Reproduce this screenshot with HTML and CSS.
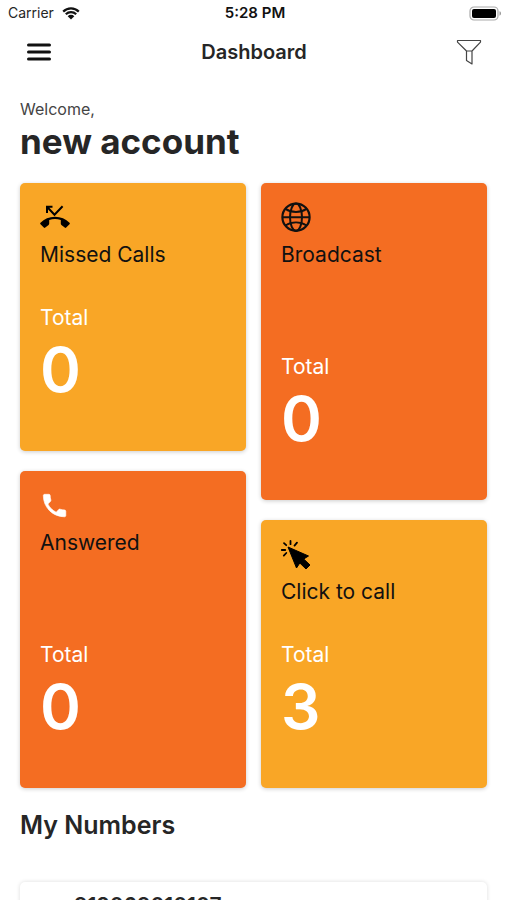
FILE: index.html
```html
<!DOCTYPE html>
<html lang="en">
<head>
<meta charset="utf-8">
<meta name="viewport" content="width=device-width, initial-scale=1">
<title>Dashboard</title>
<link rel="stylesheet" href="styles.css">
</head>
<body>
<div class="app">
  <div class="status">
    <div class="carrier">Carrier
      <svg class="wifi" viewBox="0 0 18 13" aria-hidden="true">
        <path d="M1.2 4.6a11 11 0 0 1 15.6 0M3.8 7.3a7.4 7.4 0 0 1 10.4 0" fill="none" stroke="#111" stroke-width="2.2"/>
        <path d="M5.7 9.2a4.7 4.7 0 0 1 6.6 0L9 12.6z" fill="#111"/>
      </svg>
    </div>
    <div class="time">5:28 PM</div>
    <svg class="battery" viewBox="0 0 33 15" aria-hidden="true">
      <rect x="1" y="1" width="28" height="13" rx="4" fill="#fff" stroke="#aaa" stroke-width="1.2"/>
      <rect x="3" y="3" width="24" height="9" rx="2" fill="#000"/>
      <path d="M30.5 5.3c2 .6 2 3.800 0 4.400z" fill="#999"/>
    </svg>
  </div>
  <header class="bar">
    <button class="icon-button" type="button" aria-label="Menu">
      <svg viewBox="0 0 24 24" width="24" height="24"><path d="M1.500 5h21M1.500 12h21M1.500 19h21" stroke="#111" stroke-width="3" stroke-linecap="round"/></svg>
    </button>
    <h1 class="title">Dashboard</h1>
    <button class="icon-button" type="button" aria-label="Filter">
      <svg viewBox="0 0 26 26" width="26" height="26"><path d="M1.500 1.500h23v1.600L16 12v13l-5.500-3.500V12L1.500 3.100zM10.500 12H16" fill="none" stroke="#444" stroke-width="1.200" stroke-linejoin="round"/></svg>
    </button>
  </header>
  <main class="content">
    <p class="welcome">Welcome,</p>
    <h2 class="account">new account</h2>
    <div class="cards">
      <div class="column">
        <section class="card amber">
          <svg class="icon" viewBox="0 0 30 30" aria-hidden="true">
            <path d="M7 10V3.800H12.500M7.200 4l7.300 7.800L22.600 3.300" fill="none" stroke="#000" stroke-width="2"/>
            <path d="M15 13.800C9.300 13.800 4.200 16 .5 19.700a1 1 0 0 0 0 1.500l3.300 3.400a1 1 0 0 0 1.500 0l3.300-2.700a1.500 1.500 0 0 0 .6-1.100v-3.800a19 19 0 0 1 11.600 0v3.800c0 .4.200.8.600 1.100l3.300 2.700a1 1 0 0 0 1.500 0l3.300-3.400a1 1 0 0 0 0-1.500C25.800 16 20.700 13.800 15 13.800z"/>
          </svg>
          <h3 class="name">Missed Calls</h3>
          <p class="label">Total</p>
          <p class="count">0</p>
        </section>
        <section class="card orange tall">
          <svg class="icon" viewBox="0 0 30 30" aria-hidden="true">
            <path d="M7.900 13.000c1.800 3.500 4.700 6.400 8.200 8.200l2.700-2.700c.4-.4.900-.5 1.300-.3 1.400.5 2.900.7 4.400.7.700 0 1.300.6 1.300 1.300V24.500c0 .7-.6 1.300-1.300 1.300C12.700 25.800 3.300 16.400 3.300 4.600c0-.7.600-1.300 1.300-1.300h4.300c.7 0 1.300.6 1.300 1.300 0 1.500.2 3 .7 4.400.1.400 0 .9-.3 1.300z" fill="#fff" stroke="#fff" stroke-width=".6"/>
          </svg>
          <h3 class="name">Answered</h3>
          <p class="label">Total</p>
          <p class="count">0</p>
        </section>
      </div>
      <div class="column">
        <section class="card orange tall">
          <svg class="icon" viewBox="0 0 30 30" aria-hidden="true">
            <path d="M1.200 14.200h27.600M4.500 5.900c6 4.200 15 4.200 21 0M4.500 22.500c6-4.200 15-4.200 21 0" fill="none" stroke="#111" stroke-width="1.900"/>
            <circle cx="15" cy="14.200" r="13.600" fill="none" stroke="#111" stroke-width="2.200"/>
            <ellipse cx="15" cy="14.200" rx="6" ry="13.600" fill="none" stroke="#111" stroke-width="2"/>
          </svg>
          <h3 class="name">Broadcast</h3>
          <p class="label">Total</p>
          <p class="count">0</p>
        </section>
        <section class="card amber">
          <svg class="icon" viewBox="0 0 30 30" aria-hidden="true">
            <path d="M7 7l20.500 9-4.800 3 6.300 6-4 4-6.200-6-3.300 5z" stroke="#000" stroke-linejoin="round"/>
            <path d="M9.500 1v3.200M16 2.700l-2.500 2.900M3 3.200l2.200 2M.8 10h3.400M5.300 13l-2.500 2.600" stroke="#000" stroke-width="1.800" stroke-linecap="round"/>
          </svg>
          <h3 class="name">Click to call</h3>
          <p class="label">Total</p>
          <p class="count">3</p>
        </section>
      </div>
    </div>
    <h2 class="section-title">My Numbers</h2>
    <ul class="numbers">
      <li class="number">918069010107</li>
    </ul>
  </main>
</div>
</body>
</html>
```

FILE: styles.css
```css
* { box-sizing: border-box; }

body {
  margin: 0;
  background: #fff;
  color: #262626;
  font-family: Inter, "Liberation Sans", sans-serif;
}

h1, h2, h3, p, ul {
  margin: 0;
  padding: 0;
}

svg { display: block; overflow: visible; }

.app {
  display: flex;
  flex-direction: column;
  height: 100vh;
  overflow: hidden;
}

.status {
  display: grid;
  grid-template-columns: 1fr auto 1fr;
  align-items: center;
  height: 26px;
  flex: none;
  padding: 0 5px 0 8px;
  font-size: 14px;
  line-height: 20px;
}

.carrier {
  display: flex;
  align-items: center;
  gap: 8px;
}

.wifi { width: 18px; height: 13px; }

.time {
  color: #111;
  font-size: 15px;
  font-weight: 600;
}

.battery {
  width: 33px;
  height: 15px;
  justify-self: end;
}

.bar {
  display: flex;
  align-items: center;
  justify-content: space-between;
  height: 52px;
  flex: none;
  padding: 0 19px 0 20px;
}

.icon-button {
  display: flex;
  align-items: center;
  justify-content: center;
  width: 38px;
  height: 38px;
  padding: 0;
  border: 0;
  background: none;
}

.title {
  font-size: 20px;
  line-height: 28px;
  font-weight: 600;
}

.content {
  flex: 1;
  min-height: 0;
  padding: 20px 20px 0;
  overflow-y: auto;
  scrollbar-width: none;
}

.welcome {
  color: #444;
  font-size: 16px;
  line-height: 22px;
}

.account {
  font-size: 35px;
  line-height: 42px;
  font-weight: 700;
}

.cards {
  display: grid;
  grid-template-columns: 1fr 1fr;
  gap: 15px;
  margin-top: 21px;
}

.column {
  display: flex;
  flex-direction: column;
  gap: 20px;
}

.card {
  padding: 20px 20px 45px;
  border-radius: 5px;
  box-shadow: 0 1px 4px rgba(0, 0, 0, 0.2);
}

.amber { background: #f9a626; }
.orange { background: #f46d22; }

.icon { width: 30px; height: 30px; }

.name {
  margin: 8px 0 35px;
  color: #111;
  font-size: 21px;
  line-height: 28px;
  font-weight: 400;
}

.tall .name { margin-bottom: 84px; }

.label {
  color: #fff;
  font-size: 21px;
  line-height: 28px;
}

.count {
  margin-top: 2px;
  color: #fff;
  font-size: 62px;
  line-height: 72px;
  font-weight: 600;
}

.section-title {
  margin-top: 20px;
  font-size: 25px;
  line-height: 34px;
  font-weight: 600;
}

.numbers {
  margin-top: 40px;
  list-style: none;
}

.number {
  padding: 11px 54px 40px;
  border-radius: 5px;
  background: #fff;
  box-shadow: 0 0 4px rgba(0, 0, 0, 0.14);
  font-size: 21px;
  line-height: 26px;
  font-weight: 600;
}
```
